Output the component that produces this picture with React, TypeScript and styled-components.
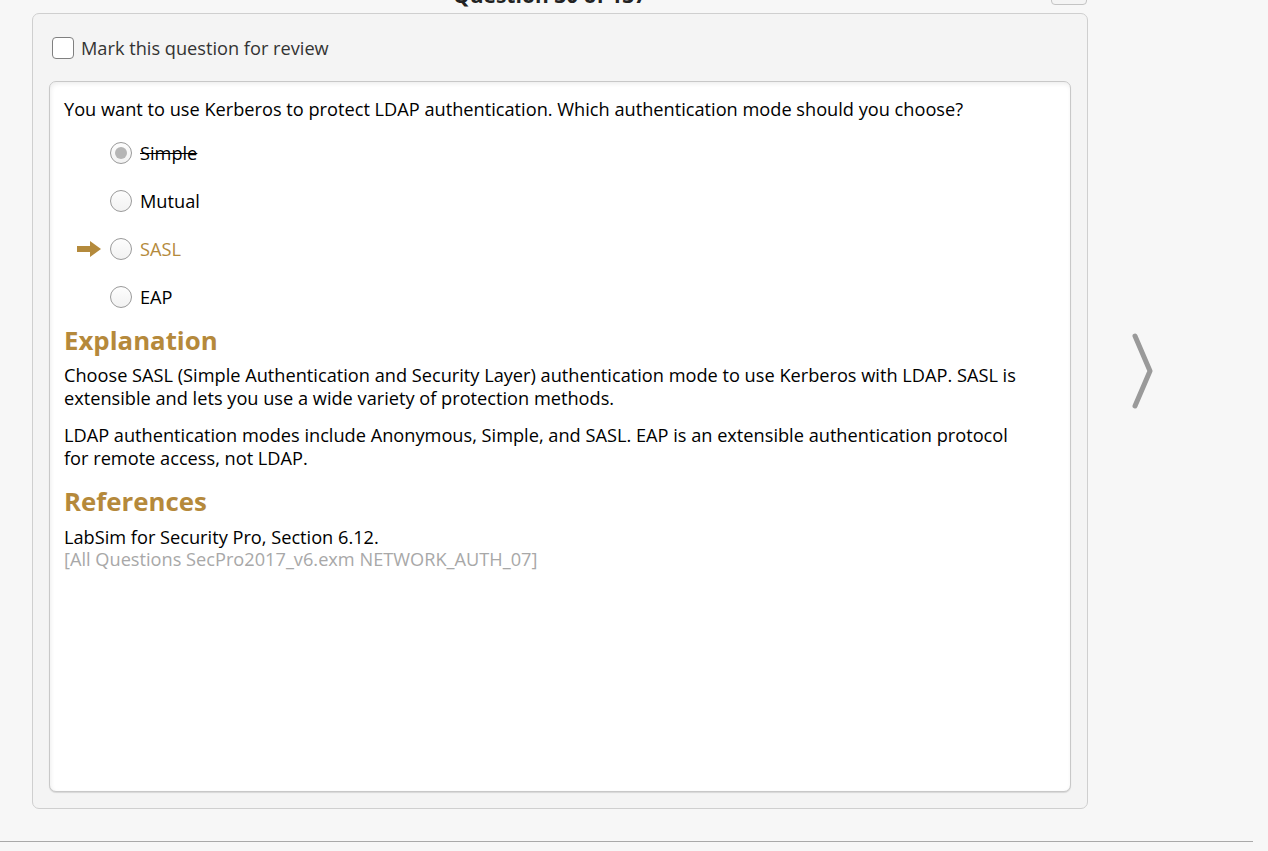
import React from "react";
import styled, { createGlobalStyle } from "styled-components";

const Global = createGlobalStyle`
  html, body { margin: 0; padding: 0; }
  body {
    background: #f7f7f7;
    font-family: "Open Sans", "Noto Sans", "DejaVu Sans", sans-serif;
    color: #000;
  }
`;

const Page = styled.div`
  width: 1268px;
  height: 851px;
  overflow: hidden;
  display: flex;
  flex-direction: column;
  background: #f7f7f7;
`;

const Header = styled.div`
  height: 13px;
  display: flex;
  align-items: flex-end;
`;

const Title = styled.div`
  margin-left: 453px;
  margin-bottom: 6px;
  font-size: 21px;
  font-weight: 700;
  line-height: 24px;
  color: #222;
  white-space: nowrap;
`;

const HeaderButton = styled.div`
  margin-left: auto;
  margin-right: 181px;
  margin-bottom: 8px;
  width: 34px;
  height: 20px;
  border: 1px solid #c4c4c4;
  border-radius: 4px;
  background: #f4f4f4;
`;

const Main = styled.div`
  display: flex;
  padding-left: 32px;
`;

const Panel = styled.div`
  width: 1056px;
  height: 796px;
  background: #f4f4f4;
  border: 1px solid #cfcfcf;
  border-radius: 7px;
  padding: 23px 16px 16px 16px;
  box-sizing: border-box;
  display: flex;
  flex-direction: column;
`;

const ReviewRow = styled.label`
  display: flex;
  align-items: center;
  gap: 7px;
  margin-left: 3px;
  height: 22px;
  font-size: 18.2px;
  color: #333;
`;

const Checkbox = styled.span`
  width: 20px;
  height: 20px;
  border: 1px solid #808080;
  border-radius: 4px;
  background: #fff;
`;

const Card = styled.div`
  margin-top: 22px;
  flex: 1;
  background: #fff;
  border: 1px solid #c8c8c8;
  border-radius: 7px;
  box-shadow: inset 1px 2px 4px rgba(0, 0, 0, 0.07), 0 1px 1px rgba(0, 0, 0, 0.12);
  padding: 16px 14px 15px 14px;
  font-size: 18.2px;
  line-height: 23px;
`;

const Question = styled.div`
  margin-bottom: 8px;
`;

const Options = styled.div`
  display: flex;
  flex-direction: column;
`;

const OptionRow = styled.div<{ $highlight?: boolean }>`
  display: flex;
  align-items: center;
  height: 48px;
  color: ${(p) => (p.$highlight ? "#b48a3c" : "#000")};
`;

const Gutter = styled.div`
  width: 46px;
  display: flex;
  justify-content: flex-end;
  padding-right: 9px;
  box-sizing: border-box;
`;

const Radio = styled.span<{ $selected?: boolean }>`
  width: 20px;
  height: 20px;
  border-radius: 50%;
  border: 1px solid #9a9a9a;
  background: linear-gradient(#fdfdfd, #f2f2f2);
  display: flex;
  align-items: center;
  justify-content: center;
  margin-right: 8px;
  &::after {
    content: "";
    display: ${(p) => (p.$selected ? "block" : "none")};
    width: 12px;
    height: 12px;
    border-radius: 50%;
    background: #b5b5b5;
  }
`;

const OptionText = styled.span<{ $struck?: boolean }>`
  text-decoration: ${(p) => (p.$struck ? "line-through" : "none")};
`;

const Heading = styled.div`
  margin-top: 4px;
  font-size: 25.8px;
  line-height: 30px;
  font-weight: 700;
  color: #b5893b;
`;

const Para = styled.p<{ $first?: boolean }>`
  margin: ${(p) => (p.$first ? "9px 0 14px 0" : "0")};
  max-width: 965px;
`;

const RefHeading = styled(Heading)`
  margin-top: 16px;
`;

const RefText = styled.div`
  margin-top: 10px;
  line-height: 22px;
`;

const Muted = styled.div`
  color: #a8a8a8;
  line-height: 22px;
`;

const NextArea = styled.div`
  flex: 1;
  display: flex;
  align-items: flex-start;
  padding-top: 320px;
  padding-left: 43px;
`;

const Footer = styled.div`
  margin-top: 32px;
  width: 1253px;
  height: 1px;
  background: #a9a9a9;
`;

const Arrow = () => (
  <svg width="24" height="16" viewBox="0 0 24 16">
    <path d="M0 5h13V0l11 8-11 8v-5H0z" fill="#b48a3c" />
  </svg>
);

const Chevron = () => (
  <svg width="24" height="78" viewBox="0 0 24 78">
    <polyline
      points="4,3 19,38 4,73"
      fill="none"
      stroke="#9a9a9a"
      strokeWidth="5"
      strokeLinecap="round"
      strokeLinejoin="round"
    />
  </svg>
);

const options = [
  { text: "Simple", selected: true, struck: true },
  { text: "Mutual" },
  { text: "SASL", correct: true },
  { text: "EAP" },
];

export default function App() {
  return (
    <Page>
      <Global />
      <Header>
        <Title>Question 30 of 137</Title>
        <HeaderButton />
      </Header>
      <Main>
        <Panel>
          <ReviewRow>
            <Checkbox />
            Mark this question for review
          </ReviewRow>
          <Card>
            <Question>
              You want to use Kerberos to protect LDAP authentication. Which authentication mode
              should you choose?
            </Question>
            <Options>
              {options.map((o) => (
                <OptionRow key={o.text} $highlight={o.correct}>
                  <Gutter>{o.correct && <Arrow />}</Gutter>
                  <Radio $selected={o.selected} />
                  <OptionText $struck={o.struck}>{o.text}</OptionText>
                </OptionRow>
              ))}
            </Options>
            <Heading>Explanation</Heading>
            <Para $first>
              Choose SASL (Simple Authentication and Security Layer) authentication mode to use
              Kerberos with LDAP. SASL is extensible and lets you use a wide variety of protection
              methods.
            </Para>
            <Para>
              LDAP authentication modes include Anonymous, Simple, and SASL. EAP is an extensible
              authentication protocol for remote access, not LDAP.
            </Para>
            <RefHeading>References</RefHeading>
            <RefText>LabSim for Security Pro, Section 6.12.</RefText>
            <Muted>[All Questions SecPro2017_v6.exm NETWORK_AUTH_07]</Muted>
          </Card>
        </Panel>
        <NextArea>
          <Chevron />
        </NextArea>
      </Main>
      <Footer />
    </Page>
  );
}
